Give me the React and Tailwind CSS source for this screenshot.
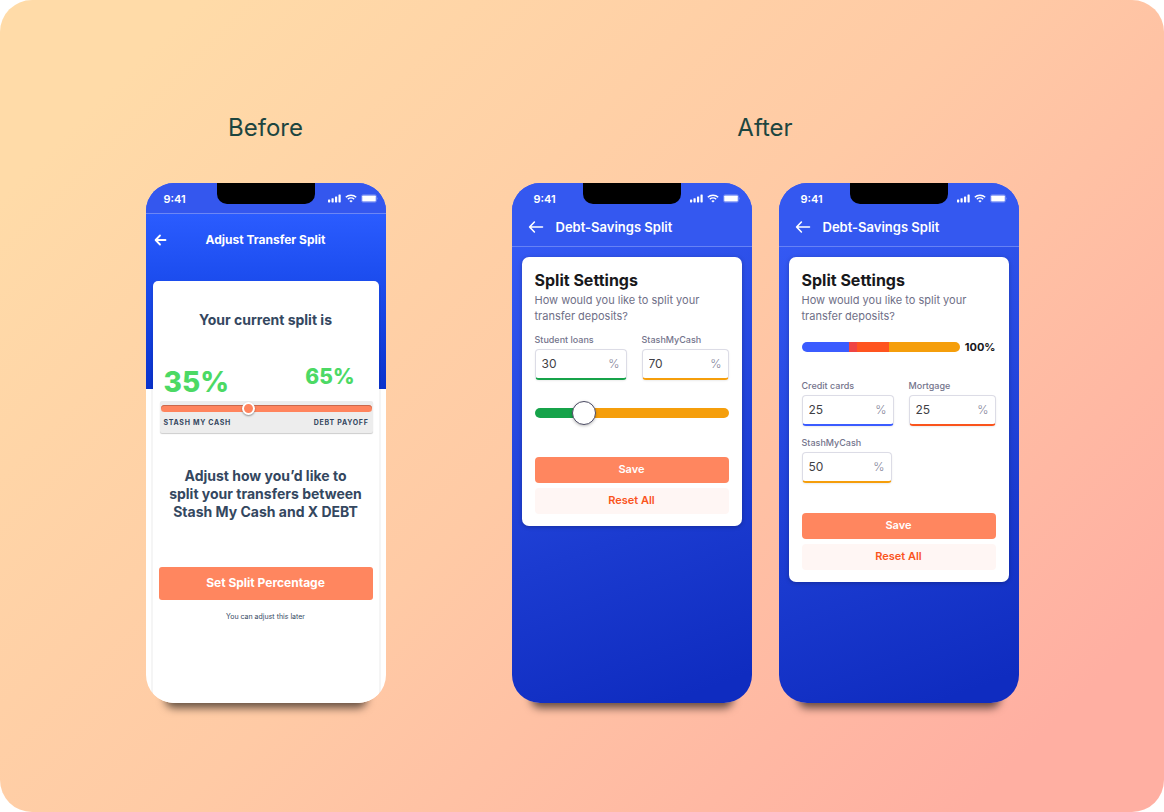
import { useId, useState } from "react";

function SignalIcon() {
  return (
    <svg width="13" height="9" viewBox="0 0 13 9" fill="currentColor" aria-hidden="true">
      <rect x="0" y="5.6" width="2.2" height="2.8" rx="0.6" />
      <rect x="3.5" y="4.2" width="2.2" height="4.2" rx="0.6" />
      <rect x="7" y="2.4" width="2.2" height="6" rx="0.6" />
      <rect x="10.5" y="0.4" width="2.2" height="8" rx="0.6" />
    </svg>
  );
}

function WifiIcon() {
  return (
    <svg width="12" height="9" viewBox="0 0 12 9" fill="none" stroke="currentColor" aria-hidden="true">
      <path d="M0.8 3.3C3.7 0.5 8.3 0.5 11.2 3.3" strokeWidth="1.5" />
      <path d="M2.8 5.2C4.6 3.5 7.4 3.5 9.2 5.2" strokeWidth="1.4" />
      <path d="M6 8.6L4.3 6.9C5.2 6.1 6.8 6.1 7.7 6.9Z" fill="currentColor" stroke="none" />
    </svg>
  );
}

function BatteryIcon() {
  return (
    <svg width="17" height="9" viewBox="0 0 17 9" aria-hidden="true">
      <rect x="0.5" y="0.7" width="15" height="7.6" rx="1.8" fill="none" stroke="white" strokeOpacity="0.25" />
      <rect x="1.2" y="1.4" width="13.6" height="6.2" rx="0.8" fill="white" />
      <path d="M16 3.2C16.7 3.5 16.7 5.5 16 5.8Z" fill="white" fillOpacity="0.4" />
    </svg>
  );
}

function Phone({ className, children }) {
  return (
    <article
      className={`flex min-h-[520px] w-60 flex-col overflow-hidden rounded-[28px] shadow-[0_24px_8px_-19px_rgba(0,0,0,0.6)] ${className}`}
    >
      {children}
    </article>
  );
}

function StatusBar({ className }) {
  return (
    <div className={`grid h-[30px] items-center text-white ${className}`}>
      <span className="pt-[2px] text-[11px] leading-4 font-semibold">9:41</span>
      <span className="h-[21px] self-start rounded-b-[10px] bg-black" />
      <span className="flex items-center justify-end gap-1 pt-[2px]">
        <SignalIcon />
        <WifiIcon />
        <BatteryIcon />
      </span>
    </div>
  );
}

function BeforePhone() {
  const [value, setValue] = useState(35);
  return (
    <Phone className="bg-[linear-gradient(180deg,#2b5cff_30px,#1d4ef0_90px,#0a32cc_206px,#ffffff_206px)]">
      <div className="border-b border-[#6c87f5] bg-[#3457ee]">
        <StatusBar className="grid-cols-[53px_98px_1fr] pr-2 pl-[18px]" />
      </div>
      <header className="grid h-[52px] grid-cols-[1fr_auto_1fr] items-center px-2 text-white">
        <button type="button" aria-label="Back" className="flex h-4 w-4 items-center">
          <svg width="13" height="12" viewBox="0 0 13 12" fill="none" stroke="currentColor" strokeWidth="1.8" strokeLinecap="round" strokeLinejoin="round">
            <path d="M11.5 6H1.8M6 1.5L1.6 6L6 10.5" />
          </svg>
        </button>
        <h3 className="text-[12px] leading-4 font-bold">Adjust Transfer Split</h3>
      </header>
      <div className="mx-[7px] mt-[15px] flex grow flex-col rounded-t-[5px] bg-white px-[6px] text-center text-[#34475f] shadow-[0_2px_0_2px_rgba(0,0,0,0.04)]">
        <h4 className="mt-[30px] text-[14px] leading-[18px] font-bold">Your current split is</h4>
        <div className="mt-9 flex h-[34px] justify-between pr-[18px] pl-[5px] font-extrabold text-[#4cd964]">
          <span className="text-[28px] leading-[34px]">35%</span>
          <span className="text-[21px] leading-6">65%</span>
        </div>
        <div className="mt-[2px] ml-[1px] rounded-xs bg-[#ededed] px-[1px] pb-1 shadow-[0_1px_1px_rgba(0,0,0,0.2)]">
          <input
            type="range"
            min="0"
            max="85"
            aria-label="Stash My Cash share"
            value={value}
            onChange={(e) => setValue(Number(e.target.value))}
            className="block h-4 w-full appearance-none bg-transparent [&::-webkit-slider-runnable-track]:h-[7px] [&::-webkit-slider-runnable-track]:rounded-full [&::-webkit-slider-runnable-track]:bg-[#ff845d] [&::-webkit-slider-runnable-track]:shadow-[inset_0_1px_0_#c9684c] [&::-webkit-slider-thumb]:-mt-[3px] [&::-webkit-slider-thumb]:size-[13px] [&::-webkit-slider-thumb]:appearance-none [&::-webkit-slider-thumb]:rounded-full [&::-webkit-slider-thumb]:border-2 [&::-webkit-slider-thumb]:border-white [&::-webkit-slider-thumb]:bg-[#ff845d] [&::-webkit-slider-thumb]:shadow-[0_1px_2px_rgba(0,0,0,0.4)]"
          />
          <div className="flex justify-between px-[3px] text-[7px] leading-3 font-bold tracking-widest uppercase">
            <span>Stash My Cash</span>
            <span>Debt Payoff</span>
          </div>
        </div>
        <p className="mt-[34px] text-[14px] leading-[18px] font-bold">
          Adjust how you’d like to
          <br />
          split your transfers between
          <br />
          Stash My Cash and X DEBT
        </p>
        <button type="button" className="mt-[46px] h-[33px] rounded-[3px] bg-[#ff865f] text-[12px] font-bold text-white">
          Set Split Percentage
        </button>
        <p className="mt-3 text-[7px] leading-[10px]">You can adjust this later</p>
      </div>
    </Phone>
  );
}

function PercentField({ label, initial, className, accent }) {
  const id = useId();
  return (
    <div className={className}>
      <label htmlFor={id} className="block text-[9px] leading-3 font-medium text-[#74748c]">
        {label}
      </label>
      <div className={`mt-[3px] flex h-[31px] items-center rounded-[4px] border border-b-2 border-[#dcdce6] px-[6px] shadow-[0_1px_2px_rgba(0,0,0,0.08)] ${accent}`}>
        <input
          id={id}
          type="text"
          inputMode="numeric"
          defaultValue={initial}
          className="w-full min-w-0 bg-transparent text-[12px] leading-4 text-[#3f3f46] outline-none"
        />
        <span className="text-[12px] leading-4 font-light text-[#85859a]">%</span>
      </div>
    </div>
  );
}

function AfterPhone({ children }) {
  return (
    <Phone className="bg-[linear-gradient(160deg,#3459f4_10%,#1b3bd0_65%,#0f2cc0_95%)]">
      <div className="border-b border-[#6682f5] bg-[#3458f0]">
        <StatusBar className="grid-cols-[49px_98px_1fr] pr-3 pl-[22px]" />
        <header className="flex h-[33px] items-center gap-[11px] px-4 pb-[4px] text-white">
          <button type="button" aria-label="Back" className="flex h-4 w-[17px] items-center">
            <svg width="16" height="14" viewBox="0 0 16 14" fill="none" stroke="currentColor" strokeWidth="1.6" strokeLinecap="round" strokeLinejoin="round">
              <path d="M14.5 7H1.8M6.4 2L1.6 7L6.4 12" />
            </svg>
          </button>
          <h3 className="text-[13px] leading-4 font-semibold">Debt-Savings Split</h3>
        </header>
      </div>
      <section className="mx-[10px] mt-[10px] rounded-[7px] bg-white px-[13px] pt-[13px] pb-3 shadow-[0_1px_4px_rgba(0,0,0,0.25)]">
        <h4 className="text-[16px] leading-5 font-bold text-[#18181b]">Split Settings</h4>
        <p className="mt-[2px] text-[11px] leading-4 text-[#6f6f87]">
          How would you like to split your
          <br />
          transfer deposits?
        </p>
        {children}
        <div className="grid gap-[5px] text-[11px] font-semibold">
          <button type="button" className="h-[26px] rounded-[4px] bg-[#ff865f] text-white">
            Save
          </button>
          <button type="button" className="h-[26px] rounded-[4px] bg-[#fff6f4] text-[#fa541c]">
            Reset All
          </button>
        </div>
      </section>
    </Phone>
  );
}

function SliderPhone() {
  const [value, setValue] = useState(30);
  return (
    <AfterPhone>
      <div className="mt-[10px] grid grid-cols-[92fr_87fr] gap-[15px]">
        <PercentField label="Student loans" initial="30" accent="border-b-[#16a34a]" />
        <PercentField label="StashMyCash" initial="70" accent="border-b-[#f59e0b]" />
      </div>
      <input
        type="range"
        min="10"
        max="100"
        aria-label="Student loans share"
        value={value}
        onChange={(e) => setValue(Number(e.target.value))}
        style={{ "--fill": `${((value - 10) / 90) * 88 + 6}%` }}
        className="mt-[21px] mb-8 block h-6 w-full appearance-none bg-transparent [&::-webkit-slider-runnable-track]:h-[10px] [&::-webkit-slider-runnable-track]:rounded-full [&::-webkit-slider-runnable-track]:bg-[linear-gradient(90deg,#16a34a_var(--fill),#f59e0b_var(--fill))] [&::-webkit-slider-thumb]:-mt-[7px] [&::-webkit-slider-thumb]:size-6 [&::-webkit-slider-thumb]:appearance-none [&::-webkit-slider-thumb]:rounded-full [&::-webkit-slider-thumb]:border [&::-webkit-slider-thumb]:border-[#4b4b63] [&::-webkit-slider-thumb]:bg-white [&::-webkit-slider-thumb]:shadow-[0_1px_3px_rgba(0,0,0,0.25)]"
      />
    </AfterPhone>
  );
}

function MultiSplitPhone() {
  return (
    <AfterPhone>
      <div className="mt-[13px] flex h-5 items-center gap-[5px]">
        <div className="flex h-[10px] grow overflow-hidden rounded-full">
          <span className="w-[30%] bg-[#3b5cff]" />
          <span className="w-[5%] bg-[#ef4444]" />
          <span className="w-[20%] bg-[#ff541f]" />
          <span className="w-[45%] bg-[#f59e0b]" />
        </div>
        <span className="text-[11px] leading-4 font-bold text-[#18181b]">100%</span>
      </div>
      <div className="mt-[23px] mb-[30px] grid grid-cols-[92fr_87fr] gap-x-[15px] gap-y-[11px]">
        <PercentField label="Credit cards" initial="25" accent="border-b-[#3b5cff]" />
        <PercentField label="Mortgage" initial="25" accent="border-b-[#fa541c]" />
        <PercentField label="StashMyCash" initial="50" className="mr-[2px]" accent="border-b-[#f59e0b]" />
      </div>
    </AfterPhone>
  );
}

export default function App() {
  return (
    <main className="flex min-h-screen items-center justify-center gap-[126px] rounded-[32px] bg-[linear-gradient(135deg,#ffdba8_10%,#ffcaa5_50%,#ffafa2_90%)] font-[Inter,sans-serif]">
      <section className="flex flex-col items-center gap-[37px]">
        <h2 className="text-[24px] leading-9 text-[#1c4540]">Before</h2>
        <BeforePhone />
      </section>
      <section className="flex flex-col items-center gap-[37px]">
        <h2 className="text-[24px] leading-9 text-[#1c4540]">After</h2>
        <div className="flex items-start gap-[27px]">
          <SliderPhone />
          <MultiSplitPhone />
        </div>
      </section>
    </main>
  );
}
